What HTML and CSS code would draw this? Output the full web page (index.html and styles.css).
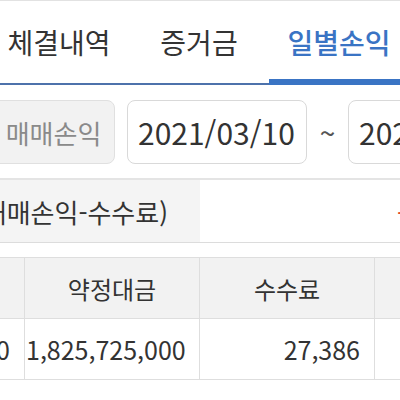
FILE: index.html
```html
<!DOCTYPE html>
<html lang="ko">
<head>
<meta charset="utf-8">
<link rel="stylesheet" href="styles.css">
</head>
<body>
<div class="screen">
  <nav class="tabs">
    <div class="tab">체결내역</div>
    <div class="tab">증거금</div>
    <div class="tab active">일별손익</div>
  </nav>
  <div class="filter">
    <div class="kind">매매손익</div>
    <div class="date">2021/03/10</div>
    <div class="tilde">~</div>
    <div class="date">2021/03/10</div>
  </div>
  <div class="summary">
    <div class="label">실현손익(처매매손익-수수료)</div>
    <div class="value">-1,800,000</div>
  </div>
  <table class="grid">
    <thead>
      <tr><th>매매손익</th><th>약정대금</th><th>수수료</th><th>손익</th></tr>
    </thead>
    <tbody>
      <tr><td>-1,800,000</td><td>1,825,725,000</td><td>27,386</td><td></td></tr>
    </tbody>
  </table>
</div>
</body>
</html>
```
FILE: styles.css
```css
html, body {
  margin: 0;
  padding: 0;
  background: #fff;
}
.screen {
  width: 400px;
  height: 400px;
  overflow: hidden;
  font-family: "Noto Sans CJK KR", "Noto Sans", sans-serif;
  color: #333;
  border-top: 1px solid #e2e2e2;
  box-sizing: border-box;
}
.tabs {
  display: flex;
  margin-left: -11px;
  height: 82px;
  border-bottom: 2px solid #4d72ab;
}
.tab {
  flex: 0 0 140px;
  display: flex;
  align-items: center;
  justify-content: center;
  font-size: 28px;
  color: #333;
  box-sizing: border-box;
}
.tab.active {
  color: #3a74c4;
  font-weight: 500;
  border-bottom: 6px solid #3a74c4;
  margin-bottom: -2px;
  padding-top: 4px;
}
.filter {
  display: flex;
  align-items: center;
  gap: 12px;
  padding: 15px 0 14px;
  border-bottom: 2px solid #e4e4e4;
}
.kind {
  flex: 0 0 123px;
  margin-left: -8px;
  height: 64px;
  box-sizing: border-box;
  border: 1px solid #e0e0e0;
  border-radius: 8px;
  background: #f2f2f2;
  color: #8a8a8a;
  font-size: 26px;
  display: flex;
  align-items: center;
  justify-content: center;
}
.date {
  flex: 0 0 180px;
  height: 64px;
  box-sizing: border-box;
  border: 1px solid #d9d9d9;
  border-radius: 8px;
  padding-left: 10px;
  font-size: 30px;
  color: #333;
  display: flex;
  align-items: center;
  white-space: nowrap;
}
.tilde {
  flex: 0 0 17px;
  text-align: center;
  font-size: 28px;
  color: #555;
}
.summary {
  display: flex;
  height: 62px;
  border-bottom: 1px solid #dcdcdc;
}
.label {
  flex: 0 0 200px;
  background: #f4f4f4;
  display: flex;
  align-items: center;
  justify-content: flex-end;
  padding-right: 32px;
  box-sizing: border-box;
  font-size: 26px;
  color: #333;
  white-space: nowrap;
  overflow: hidden;
}
.value {
  flex: 1;
  display: flex;
  align-items: center;
  padding-left: 197px;
  font-size: 26px;
  color: #e04a2a;
  white-space: nowrap;
  overflow: hidden;
}
.grid {
  margin-top: 14px;
  margin-left: -151px;
  border-collapse: collapse;
  table-layout: fixed;
  width: 700px;
  font-size: 24px;
}
.grid th,
.grid td {
  width: 175px;
  border: 1px solid #dedede;
  white-space: nowrap;
  overflow: hidden;
  box-sizing: border-box;
}
.grid th {
  height: 61px;
  background: #f2f2f2;
  font-weight: 400;
  color: #333;
  text-align: center;
}
.grid td {
  height: 61px;
  text-align: right;
  padding-right: 14px;
  font-size: 25px;
  color: #333;
}
```
